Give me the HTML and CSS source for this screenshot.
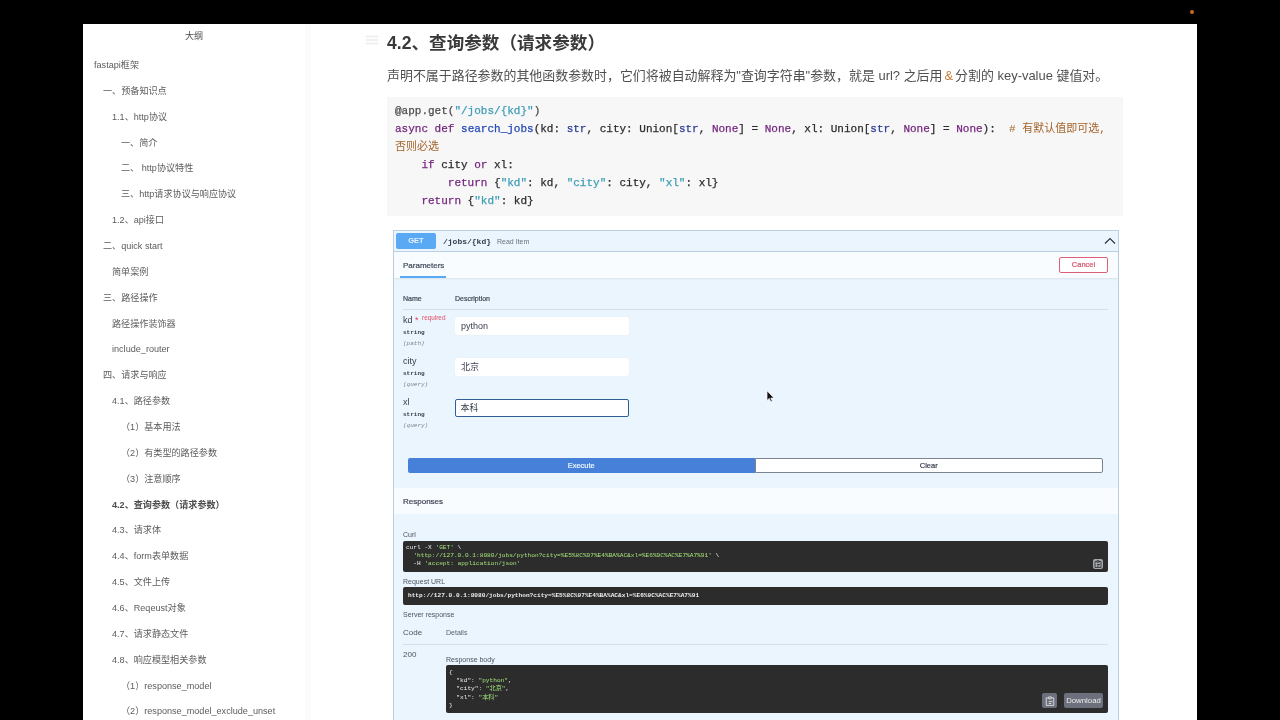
FILE: index.html
```html
<!DOCTYPE html>
<html lang="zh">
<head>
<meta charset="utf-8">
<title>4.2、查询参数</title>
<link rel="stylesheet" href="styles.css">
</head>
<body>
<span class="rec-dot"></span>
<div class="window">
  <aside class="outline">
    <div class="outline-title">大纲</div>
    <div class="oi l0">fastapi框架</div>
    <div class="oi l1">一、预备知识点</div>
    <div class="oi l2">1.1、http协议</div>
    <div class="oi l3">一、简介</div>
    <div class="oi l3">二、 http协议特性</div>
    <div class="oi l3">三、http请求协议与响应协议</div>
    <div class="oi l2">1.2、api接口</div>
    <div class="oi l1">二、quick start</div>
    <div class="oi l2">简单案例</div>
    <div class="oi l1">三、路径操作</div>
    <div class="oi l2">路径操作装饰器</div>
    <div class="oi l2">include_router</div>
    <div class="oi l1">四、请求与响应</div>
    <div class="oi l2">4.1、路径参数</div>
    <div class="oi l3">（1）基本用法</div>
    <div class="oi l3">（2）有类型的路径参数</div>
    <div class="oi l3">（3）注意顺序</div>
    <div class="oi l2 active">4.2、查询参数（请求参数）</div>
    <div class="oi l2">4.3、请求体</div>
    <div class="oi l2">4.4、form表单数据</div>
    <div class="oi l2">4.5、文件上传</div>
    <div class="oi l2">4.6、Reqeust对象</div>
    <div class="oi l2">4.7、请求静态文件</div>
    <div class="oi l2">4.8、响应模型相关参数</div>
    <div class="oi l3">（1）response_model</div>
    <div class="oi l3">（2）response_model_exclude_unset</div>
  </aside>
  <main class="doc">
    <h2 class="doc-h">
      <svg class="anchor" width="14" height="10" viewBox="0 0 14 10"><path d="M1 1.5h12M1 5h12M1 8.5h12" stroke="#f0f0f0" stroke-width="1.8" fill="none"/></svg>
      4.2、查询参数（请求参数）
    </h2>
    <p class="doc-p">声明不属于路径参数的其他函数参数时，它们将被自动解释为"查询字符串"参数，就是 url? 之后用<span class="amp">&amp;</span>分割的 key-value 键值对。</p>
    <pre class="code"><span class="d">@app.get(</span><span class="s">"/jobs/{kd}"</span><span class="d">)</span>
<span class="k">async def</span> <span class="f">search_jobs</span>(kd: <span class="b">str</span>, city: Union[<span class="b">str</span>, <span class="k">None</span>] = <span class="k">None</span>, xl: Union[<span class="b">str</span>, <span class="k">None</span>] = <span class="k">None</span>):  <span class="c"># 有默认值即可选,</span>
<span class="c">否则必选</span>
    <span class="k">if</span> city <span class="k">or</span> xl:
        <span class="k">return</span> {<span class="s">"kd"</span>: kd, <span class="s">"city"</span>: city, <span class="s">"xl"</span>: xl}
    <span class="k">return</span> {<span class="s">"kd"</span>: kd}</pre>

    <section class="panel">
      <header class="op-head">
        <span class="get">GET</span>
        <span class="op-path">/jobs/{kd}</span>
        <span class="op-sum">Read Item</span>
        <svg class="chev" width="12" height="8" viewBox="0 0 12 8"><path d="M1 6.5 6 1.5l5 5" stroke="#2c3440" stroke-width="1.2" fill="none"/></svg>
      </header>
      <div class="tabs">
        <span class="tab">Parameters</span>
        <span class="cancel">Cancel</span>
      </div>
      <div class="params">
        <div class="param-head"><span class="ph-name">Name</span><span>Description</span></div>
        <div class="param">
          <div class="pinfo">
            <div class="pname">kd <span class="star">*</span><span class="req">required</span></div>
            <div class="ptype">string</div>
            <div class="pin">(path)</div>
          </div>
          <div class="input">python</div>
        </div>
        <div class="param">
          <div class="pinfo">
            <div class="pname">city</div>
            <div class="ptype">string</div>
            <div class="pin">(query)</div>
          </div>
          <div class="input">北京</div>
        </div>
        <div class="param">
          <div class="pinfo">
            <div class="pname">xl</div>
            <div class="ptype">string</div>
            <div class="pin">(query)</div>
          </div>
          <div class="input focus">本科</div>
        </div>
        <div class="actions">
          <span class="execute">Execute</span>
          <span class="clear">Clear</span>
        </div>
      </div>
      <div class="resp-bar">Responses</div>
      <div class="resp">
        <div class="lbl lbl-first">Curl</div>
        <div class="term term-curl">curl -X <span class="g">'GET'</span> \
  <span class="g">'http://127.0.0.1:8080/jobs/python?city=%E5%8C%97%E4%BA%AC&amp;xl=%E6%9C%AC%E7%A7%91'</span> \
  -H <span class="g">'accept: application/json'</span><span class="copy copy-sm"><svg width="8" height="8" viewBox="0 0 8 8"><path d="M1 1.5h2M5 1.5h2v6H1v-6M3 .7h2v1.6H3zM3 4.5h3M3 6h2" stroke="#2b2b2b" stroke-width=".8" fill="none"/></svg></span></div>
        <div class="lbl">Request URL</div>
        <div class="term term-url">http://127.0.0.1:8080/jobs/python?city=%E5%8C%97%E4%BA%AC&amp;xl=%E6%9C%AC%E7%A7%91</div>
        <div class="lbl">Server response</div>
        <div class="code-head"><span class="ch-code">Code</span><span>Details</span></div>
        <div class="resp-row">
          <div class="status">200</div>
          <div class="resp-detail">
            <div class="lbl-body">Response body</div>
            <div class="term term-body">{
  "kd": <span class="g">"python"</span>,
  "city": <span class="g">"北京"</span>,
  "xl": <span class="g">"本科"</span>
}<span class="body-btns"><span class="copy copy-lg"><svg width="10" height="10" viewBox="0 0 8 8"><path d="M1 1.5h2M5 1.5h2v6H1v-6M3 .7h2v1.6H3zM3 4.5h3M3 6h2" stroke="#e6e6e6" stroke-width=".7" fill="none"/></svg></span><span class="download">Download</span></span></div>
          </div>
        </div>
      </div>
      <svg class="cursor" width="9" height="13" viewBox="0 0 9 13"><path d="M1 .8v9.6l2.3-2 1.5 3.4 1.5-.7L4.8 8.1H8z" fill="#111" stroke="#fff" stroke-width=".7"/></svg>
    </section>
  </main>
</div>
</body>
</html>
```
FILE: styles.css
```css
* { box-sizing: border-box; }
html, body { height: 720px; margin: 0; overflow: hidden; }
body {
  position: relative;
  background: #000;
  padding: 24px 83px 0;
  font-family: "Liberation Sans", "Noto Sans CJK SC", sans-serif;
}
.rec-dot {
  position: absolute; left: 1190px; top: 10px;
  width: 4px; height: 4px; border-radius: 50%;
  background: #c8691f;
  filter: blur(0.5px);
}
.window {
  display: flex;
  height: 696px;
  background: #fff;
  overflow: hidden;
  filter: blur(0.5px);
}
.outline {
  flex: 0 0 228px;
  border-right: 6px solid #fbfbfb;
  color: #5c5c5c;
  font-size: 9.1px;
}
.outline-title { height: 29px; line-height: 25px; text-align: center; color: #4c4c4c; }
.oi { height: 25.87px; line-height: 25.87px; white-space: nowrap; }
.l0 { padding-left: 11px; }
.l1 { padding-left: 20px; }
.l2 { padding-left: 29px; }
.l3 { padding-left: 38px; }
.active { font-weight: 700; color: #4c4c4c; }

.doc { flex: 1; padding-left: 76px; min-width: 0; }
.doc-h {
  position: relative;
  margin: 8px 0 0;
  height: 24px;
  line-height: 22px;
  font-size: 17.6px;
  font-weight: 700;
  color: #3a3a3a;
}
.anchor { position: absolute; left: -22px; top: 3px; }
.doc-p {
  margin: 10px 0 0;
  height: 20px;
  line-height: 20px;
  font-size: 12.95px;
  color: #505050;
  white-space: nowrap;
}
.amp { margin: 0 2px; color: #c47a3a; }
.code {
  margin: 11px 0 0;
  width: 736px;
  height: 119px;
  padding: 5px 0 0 8px;
  background: #f7f7f7;
  font-family: "Liberation Mono", "Noto Sans CJK SC", monospace;
  font-size: 11px;
  line-height: 18px;
  color: #2c2c2c;
  -webkit-text-stroke: 0.25px currentColor;
}
.d { color: #4c4c4c; }
.k { color: #75277f; }
.f { color: #2346b8; }
.b { color: #2c3c98; }
.s { color: #3f9db6; }
.c { color: #a5642c; -webkit-text-stroke: 0; }

.panel {
  position: relative;
  margin: 14px 0 0 6px;
  width: 726px;
  height: 500px;
  background: #ebf5fd;
  border: 1px solid #bdd0e2;
  border-bottom: 0;
  color: #3b4151;
}
.op-head {
  display: flex;
  align-items: center;
  height: 21px;
  padding-left: 2px;
  border-bottom: 1px solid #b9d0e6;
}
.get {
  width: 40px; height: 16px;
  border-radius: 2px;
  background: #5aa9f5;
  color: #e8f3ff;
  font-size: 7.5px; font-weight: 700;
  line-height: 16px; text-align: center;
}
.op-path {
  margin-left: 7px;
  font: 700 8px "Liberation Mono", monospace;
  color: #333c4c;
}
.op-sum { margin-left: 6px; font-size: 7px; color: #6a7280; }
.chev { margin-left: auto; margin-right: 2px; }
.tabs {
  display: flex;
  align-items: center;
  justify-content: space-between;
  height: 26px;
  padding: 0 10px 0 6px;
  background: #f9fcff;
  box-shadow: 0 1px 2px rgba(0,0,0,.07);
}
.tab {
  align-self: stretch;
  width: 46px;
  padding-left: 3px;
  line-height: 27px;
  font-size: 8px;
  color: #3f4858;
  -webkit-text-stroke: 0.2px currentColor;
  border-bottom: 2px solid #5aa9f5;
  white-space: nowrap;
}
.cancel {
  width: 49px; height: 16px;
  border: 1.5px solid #dc6078;
  border-radius: 2px;
  background: #fff;
  color: #d9506a;
  font-size: 7.5px;
  -webkit-text-stroke: 0.2px currentColor;
  line-height: 13px; text-align: center;
}
.params { padding: 14px 10px 15px 9px; }
.param-head {
  display: flex;
  height: 18px;
  line-height: 14px;
  font-size: 7px;
  color: #3f4858;
  -webkit-text-stroke: 0.2px currentColor;
  border-bottom: 1px solid #d5dfe8;
}
.ph-name { width: 52px; }
.param { display: flex; height: 41px; }
.param-head + .param { margin-top: 4px; }
.pinfo { width: 52px; padding-top: 1px; }
.pname { height: 10px; line-height: 10px; font-size: 9px; color: #3b4151; white-space: nowrap; position: relative; }
.star { color: #e0405a; }
.req { position: absolute; left: 19px; top: -2px; font-size: 6.4px; color: #e0506a; }
.ptype { margin-top: 3px; height: 10px; font: 700 6px/10px "Liberation Mono", monospace; color: #3b4151; }
.pin { margin-top: 1px; height: 10px; font: italic 6px/10px "Liberation Mono", monospace; color: #7a8290; }
.input {
  width: 174px; height: 18px;
  margin-top: 3px;
  padding-left: 6px;
  background: #fff;
  border-radius: 2px;
  box-shadow: 0 0 1px #d8dfe5;
  font-size: 9px;
  line-height: 18px;
  color: #3b4151;
}
.focus {
  line-height: 16px;
  border: 1.5px solid #2f5f95;
  box-shadow: none;
  padding-left: 4.5px;
}
.actions { display: flex; margin: 21px 5px 0; height: 15px; }
.execute, .clear {
  flex: 1; text-align: center;
  font-size: 7.5px;
  -webkit-text-stroke: 0.2px currentColor;
  line-height: 15px;
}
.execute { background: #4680d9; color: #eef5ff; border-radius: 2px 0 0 2px; }
.clear { background: #fff; border: 1px solid #7c8492; border-radius: 0 2px 2px 0; color: #3b4151; line-height: 13px; }
.resp-bar {
  height: 26px;
  padding-left: 9px;
  background: #f9fcff;
  line-height: 28px;
  font-size: 8px;
  -webkit-text-stroke: 0.2px currentColor;
  color: #3b4151;
}
.resp { padding: 0 10px 0 9px; font-size: 7px; }
.lbl { margin-top: 4px; height: 10px; line-height: 12px; color: #4a5362; font-size: 7px; }
.lbl-first { margin-top: 15px; }
.term {
  position: relative;
  margin-top: 2px;
  background: #2c2c2c;
  border-radius: 2px;
  color: #f0f0f0;
  font-family: "Liberation Mono", "Noto Sans CJK SC", monospace;
  font-size: 6.15px;
  white-space: pre;
}
.g { color: #a2e07a; }
.term-curl { height: 31px; padding: 3px 0 0 3px; line-height: 8px; }
.term-url { margin-top: 1px; height: 18px; padding-left: 5px; line-height: 18px; font-weight: 700; }
.code-head {
  display: flex;
  align-items: center;
  margin-top: 7px;
  height: 19px;
  padding-bottom: 5px;
  border-bottom: 1px solid #d5dfe8;
  color: #5a6270;
}
.ch-code { width: 43px; font-size: 8px; color: #4a5362; }
.resp-row { display: flex; }
.status { width: 43px; padding-top: 5px; line-height: 10px; font-size: 8px; color: #4a5362; }
.resp-detail { flex: 1; padding-top: 9px; }
.lbl-body { height: 10px; line-height: 12px; font-size: 7px; color: #4a5362; }
.term-body {
  margin-top: 1px;
  height: 48px;
  padding: 4px 0 0 3px;
  line-height: 8.2px;
}
.copy { display: flex; align-items: center; justify-content: center; border-radius: 2px; }
.copy-sm {
  position: absolute; right: 5px; bottom: 3px;
  width: 10px; height: 10px;
  background: #a4a6ad;
}
.body-btns {
  position: absolute; right: 5px; bottom: 5px;
  display: flex; gap: 7px;
}
.copy-lg { width: 15px; height: 15px; background: #6c6f7c; }
.download {
  width: 39px; height: 15px;
  border-radius: 2px;
  background: #6c6f7c;
  font: 400 7.8px/15px "Liberation Sans", sans-serif;
  color: #eeeef0;
  text-align: center;
}
.cursor { position: absolute; left: 372px; top: 159px; }
```
